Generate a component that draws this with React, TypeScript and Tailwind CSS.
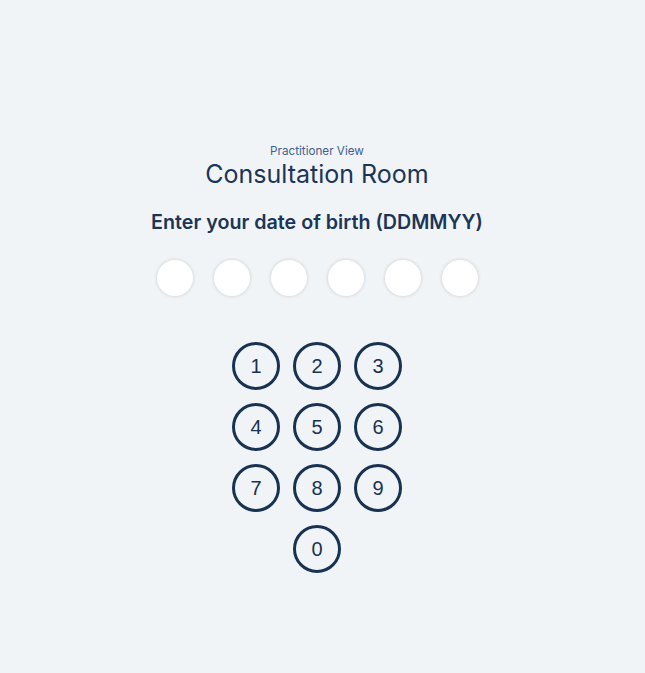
const keys = [["1", "2", "3"], ["4", "5", "6"], ["7", "8", "9"], ["0"]];

export default function App() {
  return (
    <div className="min-h-[673px] w-full bg-[#f0f4f7] pr-[11px]" style={{ fontFamily: "Inter, 'Open Sans', sans-serif" }}>
      <div className="flex flex-col items-center pt-[144px]">
        <div className="text-[11.7px] leading-[14px] text-[#3f6190]">Practitioner View</div>
        <h1 className="mt-[1px] text-[25px] leading-[30px] text-[#1c3557]">Consultation Room</h1>
        <h2 className="mt-[21px] text-[19.7px] leading-[24px] font-semibold text-[#1c3557]">Enter your date of birth (DDMMYY)</h2>
        <div className="mt-[26px] flex gap-[21px]">
          {[0, 1, 2, 3, 4, 5].map((i) => (
            <div key={i} className="h-[36px] w-[36px] rounded-full bg-white shadow-[0_0_3px_1px_rgba(0,0,0,0.1)]" />
          ))}
        </div>
        <div className="mt-[46px] flex flex-col items-center gap-[13px]">
          {keys.map((row, r) => (
            <div key={r} className="flex gap-[13px]">
              {row.map((k) => (
                <button
                  key={k}
                  className="flex h-[48px] w-[48px] items-center justify-center rounded-full border-[3px] border-[#193252] text-[20px] text-[#193252]"
                  style={{ fontFamily: "'Liberation Sans', Arial, sans-serif" }}
                >
                  {k}
                </button>
              ))}
            </div>
          ))}
        </div>
      </div>
    </div>
  );
}
